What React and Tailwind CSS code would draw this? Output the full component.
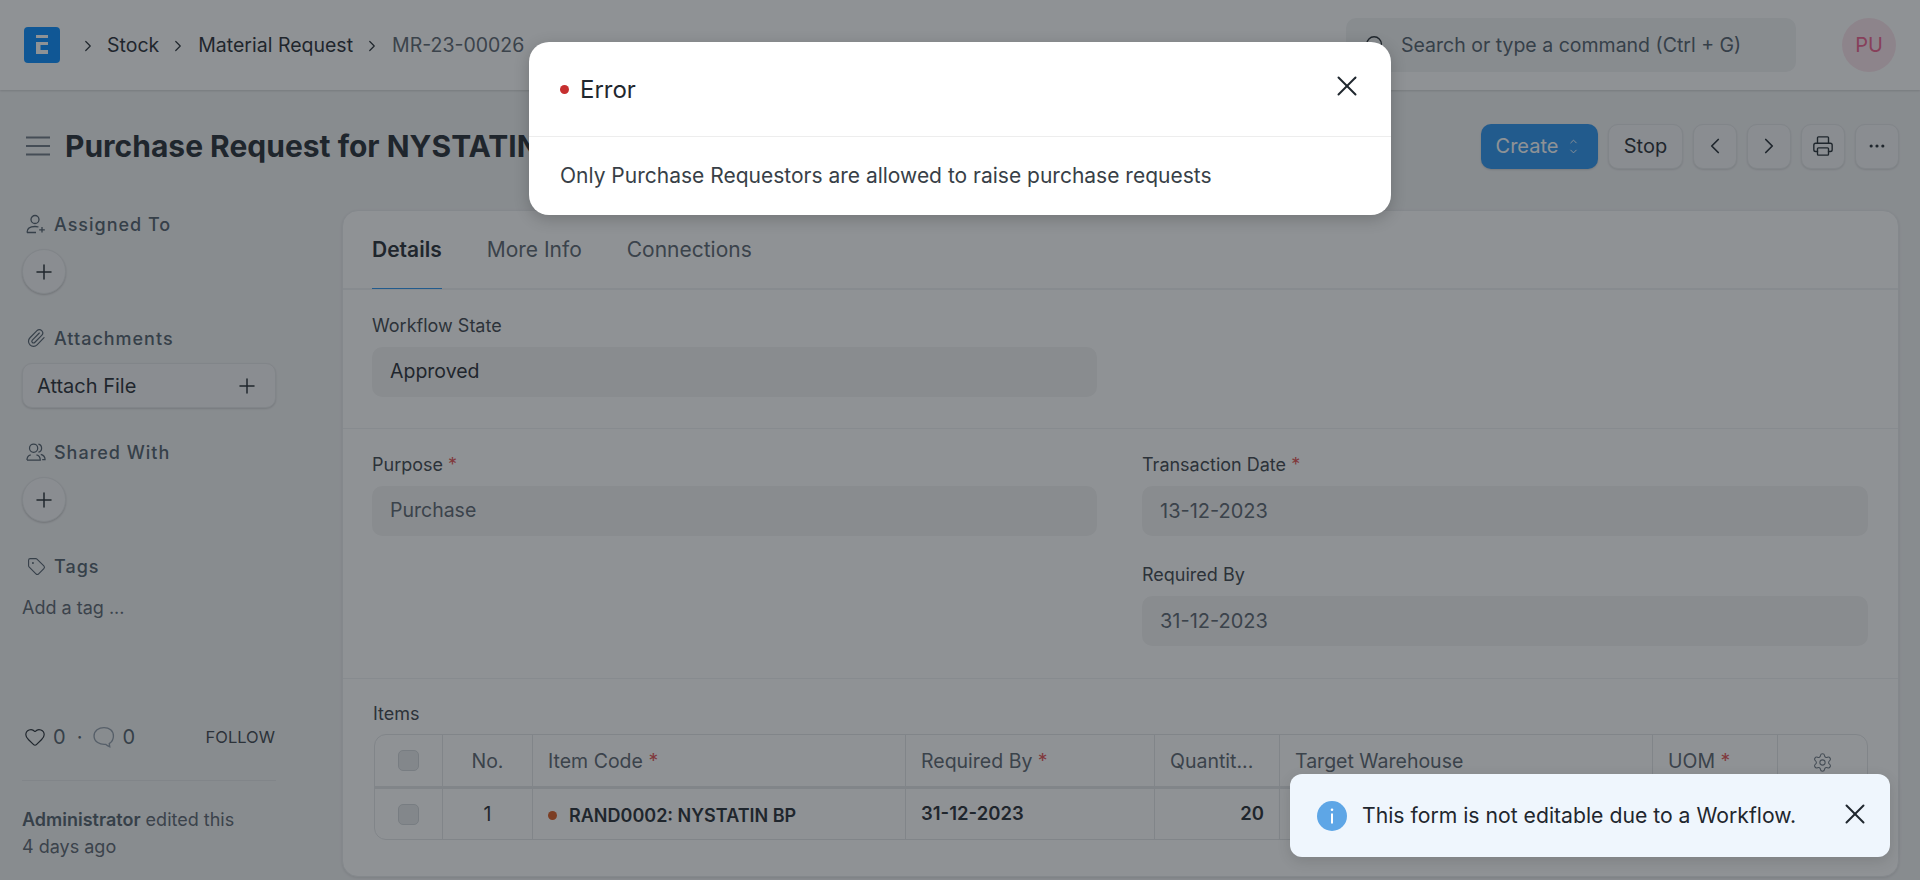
import React from "react";
import { ChevronRight, ChevronLeft, Plus, Paperclip, Tag, Heart, Settings, Printer, MoreHorizontal, X, Search, ChevronUp, ChevronDown } from "lucide-react";

const Req = () => <span className="text-[#e24c4c]"> *</span>;

function Field({ label, req, value, muted, size = "text-[19.5px]", className = "" }) {
  return (
    <div className={className}>
      <div className="text-[18px] leading-[22px] text-[#383f47]">{label}{req && <Req />}</div>
      <div className={`mt-[10px] h-[50px] rounded-[10px] bg-[#f3f3f3] pl-[18px] flex items-center ${size} ${muted ? "text-[#56606b]" : "text-[#1f272e]"}`}>{value}</div>
    </div>
  );
}

function SideHead({ icon, children }) {
  return (
    <div className="flex items-center h-[22px] pl-[4px] gap-[8px] text-[18px] font-medium tracking-[0.055em] text-[#4c5a67]">
      <span className="w-[20px] h-[20px] flex items-center justify-center">{icon}</span>
      {children}
    </div>
  );
}

const PlusCircle = () => (
  <div className="mt-[14px] w-[44px] h-[45px] rounded-full bg-[#f4f5f6] border border-[#e2e4e6] shadow-[0_1px_2px_rgba(0,0,0,0.2)] flex items-center justify-center">
    <Plus size={24} strokeWidth={1.5} className="text-[#1f272e]" />
  </div>
);

const Btn = ({ children, className = "" }) => (
  <div className={`h-[45px] rounded-[10px] bg-[#f4f5f6] border border-[#e2e4e6] shadow-[0_1px_2px_rgba(0,0,0,0.12)] flex items-center justify-center text-[#1f272e] ${className}`}>{children}</div>
);

export default function App() {
  const line = "border-r border-[#e2e4e6]";
  return (
    <div className="relative w-[1920px] h-[880px] overflow-hidden bg-[#f1f2f3] font-['Inter',sans-serif] text-[#1f272e]">
      {/* Navbar */}
      <div className="h-[90px] bg-white shadow-[0_1px_2px_rgba(0,0,0,0.15)] flex items-center pl-[24px] pr-[24px] text-[19.5px]">
        <svg width="36" height="36" viewBox="0 0 36 36" className="shrink-0">
          <rect width="36" height="36" rx="4" fill="#0089ff" />
          <path d="M12 8h12v3H12zM12 15h12v3H16.500v5H24v4H12z" fill="#fff" />
        </svg>
        <ChevronRight size={18} strokeWidth={1.6} className="ml-[19px] mt-[2px] text-[#1f272e]" />
        <span className="ml-[10px] mt-[2px]">Stock</span>
        <ChevronRight size={18} strokeWidth={1.6} className="ml-[10px] mt-[2px] text-[#1f272e]" />
        <span className="ml-[11px] mt-[2px]">Material Request</span>
        <ChevronRight size={18} strokeWidth={1.6} className="ml-[10px] mt-[2px] text-[#1f272e]" />
        <span className="ml-[11px] mt-[2px] text-[#56606b]">MR-23-00026</span>
        <div className="ml-auto w-[450px] h-[54px] mr-[46px] rounded-[10px] bg-[#f1f2f3] flex items-center pl-[18px] text-[#4c5a67]">
          <Search size={22} strokeWidth={1.5} className="text-[#1f272e]" />
          <span className="ml-[15px] mt-[2px] text-[19.500px]">Search or type a command (Ctrl + G)</span>
        </div>
        <div className="w-[54px] h-[54px] rounded-full bg-[#fbe3eb] flex items-center justify-center text-[#ee5a8a] text-[20px]">PU</div>
      </div>

      {/* Page head */}
      <div className="h-[120px] flex items-center pb-[8px] pl-[26px] pr-[21px]">
        <svg width="24" height="20" viewBox="0 0 24 20" className="shrink-0"><path d="M0 1.500h24M0 10h24M0 18.500h24" stroke="#6b7580" strokeWidth="2" /></svg>
        <div className="ml-[15px] text-[30px] font-bold whitespace-nowrap">Purchase Request for NYSTATIN BP</div>
        <div className="ml-auto flex items-center gap-[10px]">
          <div className="w-[117px] h-[45px] rounded-[10px] bg-[#2490ef] text-white text-[20px] flex items-center justify-center gap-[10px] pr-[4px] shadow-[0_1px_2px_rgba(0,0,0,0.15)]">
            Create
            <span className="flex flex-col -space-y-[1px]"><ChevronUp size={11} strokeWidth={2} /><ChevronDown size={11} strokeWidth={2} /></span>
          </div>
          <Btn className="w-[75px] text-[20px]">Stop</Btn>
          <Btn className="w-[44px]"><ChevronLeft size={26} strokeWidth={1.6} /></Btn>
          <Btn className="w-[44px]"><ChevronRight size={26} strokeWidth={1.6} /></Btn>
          <Btn className="w-[44px]"><Printer size={22} strokeWidth={1.5} /></Btn>
          <Btn className="w-[44px]"><MoreHorizontal size={20} strokeWidth={1.8} /></Btn>
        </div>
      </div>

      {/* Body */}
      <div className="flex pl-[22px]">
        {/* Sidebar */}
        <div className="w-[254px] shrink-0 pt-[3px]">
          <SideHead icon={
            <svg width="20" height="20" viewBox="0 0 20 20" fill="none" stroke="#4c5a67" strokeWidth="1.3"><circle cx="9" cy="5.500" r="4" /><path d="M1 18.500c0-4 3-6 8-6 1.500 0 2.500.2 3.500.5M1 18.500h9M16 13v5.500M13.200 15.800h5.600" /></svg>
          }>Assigned To</SideHead>
          <PlusCircle />
          <div className="mt-[33px]">
            <SideHead icon={<Paperclip size={20} strokeWidth={1.4} className="text-[#4c5a67]" />}>Attachments</SideHead>
            <div className="mt-[14px] h-[45px] rounded-[10px] bg-[#f4f5f6] border border-[#e2e4e6] shadow-[0_1px_2px_rgba(0,0,0,0.15)] flex items-center justify-between pl-[14px] pr-[16px] text-[20px]">
              Attach File
              <Plus size={24} strokeWidth={1.5} />
            </div>
          </div>
          <div className="mt-[33px]">
            <SideHead icon={
              <svg width="21" height="20" viewBox="0 0 21 20" fill="none" stroke="#4c5a67" strokeWidth="1.3"><circle cx="8" cy="6" r="4.300" /><path d="M1 18.500c0-4 2-5 4-5.500M11 13c2 .5 4 1.500 4 5.500H1M13 1.800a4.300 4.300 0 0 1 0 8.400M15.500 12.500c2 .5 4.500 1.500 4.500 5.500h-3" /></svg>
            }>Shared With</SideHead>
            <PlusCircle />
          </div>
          <div className="mt-[33px]">
            <SideHead icon={<Tag size={19} strokeWidth={1.4} className="text-[#4c5a67]" />}>Tags</SideHead>
            <div className="mt-[19px] text-[18px] leading-[24px] text-[#56606b]">Add a tag ...</div>
          </div>
          <div className="mt-[105px] flex items-center h-[24px] pl-[2px] pr-[1px] text-[20px] text-[#4c5a67]">
            <Heart size={22} strokeWidth={1.3} className="text-[#1f272e]" />
            <span className="ml-[7px]">0</span>
            <span className="ml-[11px]">·</span>
            <svg width="22" height="22" viewBox="0 0 21 21" fill="none" stroke="#8d99a6" strokeWidth="1.3" className="ml-[11px]"><path d="M10.500 1.500c5 0 9 3 9 8 0 3.500-2 6-4 7.300l.5 3c-2-.6-3.500-1.800-4-2.300-5.500.5-11-2.500-11-8 0-5 4.500-8 9.500-8z" /></svg>
            <span className="ml-[7px]">0</span>
            <span className="ml-auto text-[16.500px] text-[#383f47]">FOLLOW</span>
          </div>
          <div className="mt-[31px] h-px bg-[#e2e4e6]" />
          <div className="mt-[25px] text-[18px] leading-[27px] text-[#56606b]">
            <div><span className="font-semibold text-[#4c5a67]">Administrator</span> edited this</div>
            <div>4 days ago</div>
          </div>
        </div>

        {/* Card */}
        <div className="ml-[66px] w-[1557px] h-[667px] shrink-0 rounded-[16px] bg-white border border-[#e8eaec] shadow-[0_1px_3px_rgba(0,0,0,0.1)] overflow-hidden">
          <div className="h-[79px] border-b-[2px] border-[#eef0f2] flex pl-[29px] gap-[45px] text-[21px] text-[#56606b]">
            <div className="h-[78px] border-b-[1px] border-[#2490ef] font-semibold text-[#1f272e] flex items-center">Details</div>
            <div className="flex items-center">More Info</div>
            <div className="flex items-center">Connections</div>
          </div>

          <div className="h-[139px] border-b border-[#eef0f2] px-[29px] pt-[25px]">
            <Field className="w-[725px]" label="Workflow State" value="Approved" />
          </div>

          <div className="h-[250px] border-b border-[#eef0f2] px-[29px] pt-[25px] flex gap-[45px]">
            <Field className="w-[725px]" label="Purpose" req value="Purchase" muted />
            <div className="w-[726px]">
              <Field label="Transaction Date" req value="13-12-2023" muted size="text-[20px]" />
              <Field className="mt-[28px]" label="Required By" value="31-12-2023" muted size="text-[20px]" />
            </div>
          </div>

          <div className="px-[30px] pt-[24px]">
            <div className="text-[18px] leading-[22px] text-[#383f47]">Items</div>
            <div className="mt-[9px] ml-[1px] w-[1494px] rounded-[12px] border border-[#e2e4e6] text-[19.500px]">
              <div className="grid grid-cols-[68px_90px_373px_249px_125px_373px_125px_1fr] h-[54px] border-b-[3px] border-[#e2e4e6] text-[#56606b]">
                <div className={`${line} flex items-center justify-center`}><span className="w-[21px] h-[21px] rounded-[5px] bg-[#e6e8ea] border border-[#d1d5d9]" /></div>
                <div className={`${line} flex items-center justify-center pt-[3px]`}>No.</div>
                <div className={`${line} flex items-center pl-[15px] pt-[3px]`}><span>Item Code<Req /></span></div>
                <div className={`${line} flex items-center pl-[15px] pt-[3px]`}><span>Required By<Req /></span></div>
                <div className={`${line} flex items-center pl-[15px] pt-[3px]`}>Quantit...</div>
                <div className={`${line} flex items-center pl-[15px] pt-[3px]`}>Target Warehouse</div>
                <div className={`${line} flex items-center pl-[15px] pt-[3px]`}><span>UOM<Req /></span></div>
                <div className="flex items-center justify-center pt-[3px]"><Settings size={21} strokeWidth={1.2} className="text-[#6b7580]" /></div>
              </div>
              <div className="grid grid-cols-[68px_90px_373px_249px_125px_373px_125px_1fr] h-[50px]">
                <div className={`${line} flex items-center justify-center`}><span className="w-[21px] h-[21px] rounded-[5px] bg-[#e6e8ea] border border-[#d1d5d9]" /></div>
                <div className={`${line} flex items-center justify-center pt-[2px]`}>1</div>
                <div className={`${line} flex items-center pl-[15px] pt-[2px] font-semibold text-[18px]`}>
                  <span className="w-[9px] h-[9px] rounded-full bg-[#d9571c]" />
                  <span className="ml-[12px]">RAND0002: NYSTATIN BP</span>
                </div>
                <div className={`${line} flex items-center pl-[15px] font-semibold text-[18.500px]`}>31-12-2023</div>
                <div className={`${line} flex items-center justify-end pr-[15px] font-semibold text-[18.500px]`}>20</div>
                <div className={line} />
                <div className={line} />
                <div />
              </div>
            </div>
          </div>
        </div>
      </div>

      {/* Backdrop */}
      <div className="absolute inset-0 bg-[#1f252b]/50" />

      {/* Modal */}
      <div className="absolute left-[529px] top-[42px] w-[862px] h-[173px] rounded-[20px] bg-white shadow-[0_4px_16px_rgba(0,0,0,0.2)]">
        <div className="h-[95px] border-b border-[#ededed] flex items-center pl-[31px] pr-[27px]">
          <span className="w-[9px] h-[9px] rounded-full bg-[#c62f2f]" />
          <span className="ml-[11px] mt-[1px] text-[24px] text-[#1f272e]">Error</span>
          <X size={34} strokeWidth={1.4} className="ml-auto -mt-[6px] text-[#1f272e]" />
        </div>
        <div className="pl-[31px] pt-[25px] text-[21px] leading-[28px] text-[#383f47]">Only Purchase Requestors are allowed to raise purchase requests</div>
      </div>

      {/* Toast */}
      <div className="absolute left-[1290px] top-[774px] w-[600px] h-[83px] rounded-[12px] bg-[#eff6fd] shadow-[0_4px_14px_rgba(0,0,0,0.12)] flex items-center pl-[27px] pr-[18px]">
        <svg width="30" height="30" viewBox="0 0 30 30" className="shrink-0 mt-[1px]">
          <circle cx="15" cy="15" r="15" fill="#5ea6e6" />
          <rect x="14" y="12.500" width="2" height="10" fill="#fff" />
          <circle cx="15" cy="8.800" r="1.300" fill="#fff" />
        </svg>
        <span className="ml-[15px] text-[21.200px] text-[#1f272e]">This form is not editable due to a Workflow.</span>
        <X size={34} strokeWidth={1.4} className="ml-auto -mt-[3px] text-[#1f272e]" />
      </div>
    </div>
  );
}
